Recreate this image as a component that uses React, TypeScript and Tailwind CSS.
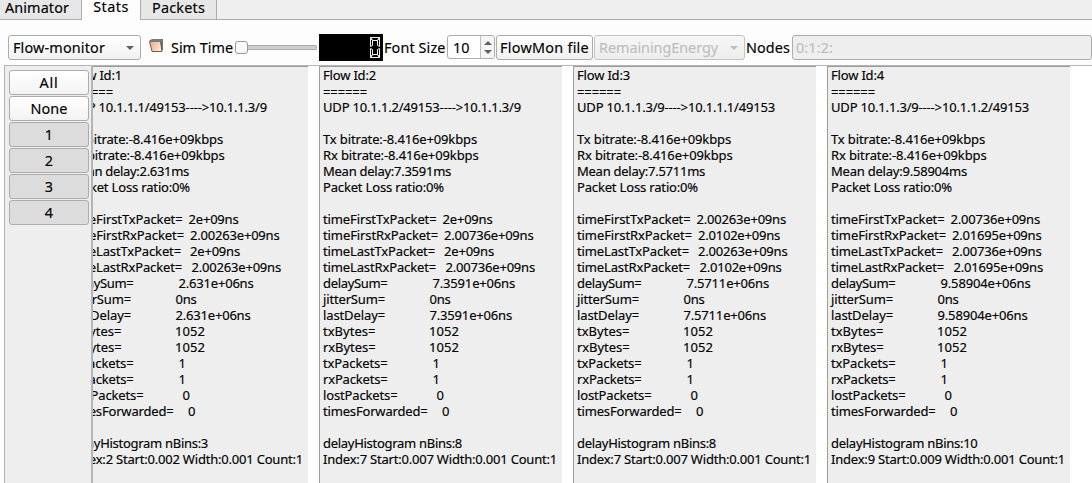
import { useLayoutEffect, useRef } from "react";

type FitProps = { text: string; w: number; className?: string };

/* Single line of text whose tracking is adjusted so that it spans w pixels. */
function Fit({ text, w, className = "" }: FitProps) {
  const ref = useRef<HTMLSpanElement>(null);
  useLayoutEffect(() => {
    const el = ref.current;
    if (!el) return;
    el.style.letterSpacing = "0px";
    const natural = el.getBoundingClientRect().width;
    el.style.letterSpacing = `${(w - natural) / text.length}px`;
  }, [text, w]);
  return (
    <span ref={ref} className={`inline-block whitespace-pre ${className}`}>
      {text}
    </span>
  );
}

type Line = { label: string; w: number; value?: string; vw?: number; at?: number };

type Flow = {
  id: number;
  route: string;
  mean: string;
  meanW: number;
  times: [string, string, string, string];
  delay: string;
  delayW: number;
  bins: number;
  binsW: number;
  index: string;
};

const flows: Flow[] = [
  {
    id: 1, route: "10.1.1.1/49153---->10.1.1.3/9", mean: "2.631", meanW: 120,
    times: ["2e+09ns", "2.00263e+09ns", "2e+09ns", "2.00263e+09ns"],
    delay: "2.631e+06ns", delayW: 75, bins: 3, binsW: 139,
    index: "Index:2 Start:0.002 Width:0.001 Count:1",
  },
  {
    id: 2, route: "10.1.1.2/49153---->10.1.1.3/9", mean: "7.3591", meanW: 128,
    times: ["2e+09ns", "2.00736e+09ns", "2e+09ns", "2.00736e+09ns"],
    delay: "7.3591e+06ns", delayW: 82.5, bins: 8, binsW: 139,
    index: "Index:7 Start:0.007 Width:0.001 Count:1",
  },
  {
    id: 3, route: "10.1.1.3/9---->10.1.1.1/49153", mean: "7.5711", meanW: 128,
    times: ["2.00263e+09ns", "2.0102e+09ns", "2.00263e+09ns", "2.0102e+09ns"],
    delay: "7.5711e+06ns", delayW: 82.5, bins: 8, binsW: 139,
    index: "Index:7 Start:0.007 Width:0.001 Count:1",
  },
  {
    id: 4, route: "10.1.1.3/9---->10.1.1.2/49153", mean: "9.58904", meanW: 136,
    times: ["2.00736e+09ns", "2.01695e+09ns", "2.00736e+09ns", "2.01695e+09ns"],
    delay: "9.58904e+06ns", delayW: 90, bins: 10, binsW: 146.5,
    index: "Index:9 Start:0.009 Width:0.001 Count:1",
  },
];

const timeWidths: Record<number, number> = { 7: 50, 12: 82, 13: 89.5 };

function linesOf(f: Flow): Line[] {
  const blank: Line = { label: "", w: 0 };
  const time = (label: string, w: number, value: string, at: number): Line => ({
    label, w, value, at, vw: timeWidths[value.length],
  });
  return [
    { label: `Flow Id:${f.id}`, w: 53 },
    { label: "======", w: 44 },
    { label: `UDP ${f.route}`, w: 198 },
    blank,
    { label: "Tx bitrate:-8.416e+09kbps", w: 154 },
    { label: "Rx bitrate:-8.416e+09kbps", w: 155.5 },
    { label: `Mean delay:${f.mean}ms`, w: f.meanW },
    { label: "Packet Loss ratio:0%", w: 121 },
    blank,
    time("timeFirstTxPacket=", 113.5, f.times[0], 119.5),
    time("timeFirstRxPacket=", 115, f.times[1], 121),
    time("timeLastTxPacket=", 112, f.times[2], 121),
    time("timeLastRxPacket=", 113, f.times[3], 122.5),
    { label: "delaySum=", w: 64.5, value: f.delay, vw: f.delayW, at: 109.5 },
    { label: "jitterSum=", w: 62, value: "0ns", vw: 21, at: 106.5 },
    { label: "lastDelay=", w: 62, value: f.delay, vw: f.delayW, at: 106.5 },
    { label: "txBytes=", w: 52.5, value: "1052", vw: 30, at: 106 },
    { label: "rxBytes=", w: 52.5, value: "1052", vw: 30, at: 106 },
    { label: "txPackets=", w: 64.5, value: "1", vw: 7.5, at: 109.5 },
    { label: "rxPackets=", w: 64.5, value: "1", vw: 7.5, at: 109.5 },
    { label: "lostPackets=", w: 74.5, value: "0", vw: 7.5, at: 113.5 },
    { label: "timesForwarded=", w: 104.5, value: "0", vw: 7.5, at: 119 },
    blank,
    { label: `delayHistogram nBins:${f.bins}`, w: f.binsW },
    { label: f.index, w: 234 },
  ];
}

function FlowPanel({ flow, clipped }: { flow: Flow; clipped: boolean }) {
  return (
    <section
      className={`flex shrink-0 overflow-hidden border-t border-[#9c9c9c] bg-[#eeeeee] ${
        clipped ? "w-[215px] justify-end" : "w-[243px] border-l"
      }`}
    >
      <div className={`shrink-0 text-[13px] leading-4 ${clipped ? "w-[239px]" : "w-[242px] pl-[3px]"}`}>
        {linesOf(flow).map((l, i) => (
          <div key={i} className="flex h-4 whitespace-pre">
            {l.value ? (
              <>
                <div className="shrink-0" style={{ width: l.at }}>
                  <Fit text={l.label} w={l.w} />
                </div>
                <Fit text={l.value} w={l.vw ?? 0} />
              </>
            ) : (
              l.label && <Fit text={l.label} w={l.w} className={i === 1 ? "pt-px" : ""} />
            )}
          </div>
        ))}
      </div>
    </section>
  );
}

function Triangle({ up = false, className = "" }: { up?: boolean; className?: string }) {
  return (
    <svg viewBox="0 0 8 4" className={`h-1 w-2 ${className}`} fill="currentColor">
      <path d={up ? "M0 4L4 0L8 4Z" : "M0 0H8L4 4Z"} />
    </svg>
  );
}

function Toolbar() {
  return (
    <div className="flex h-[45px] shrink-0 items-start bg-[#fdfdfd] pt-[15px] pl-2 text-[14.4px] leading-[25px]">
      <button className="flex h-[25px] w-[133px] shrink-0 items-center justify-between rounded-[3px] border border-[#acacac] bg-linear-to-b from-white to-[#f1f1f1] pr-[6px] pl-1">
        <Fit text="Flow-monitor" w={92} />
        <Triangle className="text-[#606060]" />
      </button>
      <svg viewBox="0 0 16 14" className="mt-1 ml-2 h-[14px] w-4 shrink-0">
        <defs>
          <linearGradient id="face" x1="0" x2="1" y1="0" y2="0.4">
            <stop offset="0" stopColor="#f0a47c" />
            <stop offset="1" stopColor="#fbe4d2" />
          </linearGradient>
        </defs>
        <path d="M0 2L3 0H14V11L11.5 13L11 3Z" fill="#737373" />
        <path d="M0.5 2.5H11.5L13 12.5H3Z" fill="url(#face)" stroke="#634d42" strokeWidth="0.9" />
        <path d="M0.5 2.8L3.5 0.3H13.8L12.2 3Z" fill="#7c7c7c" />
      </svg>
      <div className="ml-[6px] w-[64px] shrink-0">
        <Fit text="Sim Time" w={62} />
      </div>
      <div className="mt-[6px] flex h-[13px] w-[82px] shrink-0 items-center">
        <div className="h-[13px] w-[13px] shrink-0 rounded-[3px] border border-[#999999] bg-linear-to-b from-white to-[#f5f5f5]" />
        <div className="h-[5px] flex-1 rounded-r-[2px] border border-l-0 border-[#aaaaaa] bg-[#cfcfcf]" />
      </div>
      <div className="-mt-px ml-[2px] flex h-[27px] w-16 shrink-0 justify-end bg-black pt-[3px] pr-[3px]">
        <svg viewBox="0 0 10 21" className="h-[21px] w-[10px]" fill="none" stroke="#eeeeee" strokeWidth="1">
          <path d="M0.5 0.5H9.5L7.5 3.5H2.5Z" />
          <path d="M0.5 0.5V9.5L2.5 8.5V3.5Z" />
          <path d="M9.5 0.5V9.5L7.5 8.5V3.5Z" />
          <path d="M0.5 11.5V20.5L2.5 17.5V12.5Z" />
          <path d="M9.5 11.5V20.5L7.5 17.5V12.5Z" />
          <path d="M0.5 20.5H9.5L7.5 17.5H2.5Z" />
        </svg>
      </div>
      <div className="ml-[1px] w-[63px] shrink-0">
        <Fit text="Font Size" w={61.5} />
      </div>
      <div className="flex h-6 w-12 shrink-0 overflow-hidden rounded-[3px] border border-[#acacac] bg-white">
        <div className="-mt-px w-[32px] pl-[5px]">
          <Fit text="10" w={16.5} />
        </div>
        <div className="flex flex-1 flex-col items-center justify-center gap-[5px] border-l border-[#bcbcbc] bg-[#f5f5f5] text-[#606060]">
          <Triangle up />
          <Triangle />
        </div>
      </div>
      <button className="ml-px flex h-[25px] w-[97px] shrink-0 items-center rounded-[3px] border border-[#acacac] bg-linear-to-b from-white to-[#f1f1f1] pl-[3px]">
        <Fit text="FlowMon file" w={89} />
      </button>
      <button className="ml-px flex h-[25px] w-[151px] shrink-0 items-center justify-between rounded-[3px] border border-[#c4c4c4] bg-linear-to-b from-[#f7f7f7] to-[#ededed] pr-[6px] pl-1 text-[#bebebe]">
        <Fit text="RemainingEnergy" w={119} />
        <Triangle />
      </button>
      <div className="ml-px w-[46px] shrink-0">
        <Fit text="Nodes" w={44} />
      </div>
      <div className="flex h-[25px] flex-1 items-center rounded-[3px] border border-[#acacac] bg-[#eeeeee] pl-[3px] text-[#bebebe]">
        <Fit text="0:1:2:" w={37} />
      </div>
    </div>
  );
}

export default function App() {
  return (
    <div className="flex h-[483px] w-[1092px] flex-col overflow-hidden bg-white font-['Noto_Sans','Open_Sans',sans-serif] text-black [-webkit-text-stroke:0.15px]">
      <div className="flex h-5 shrink-0 bg-[#efefef] text-[14.4px] leading-[15px]">
        <div className="w-[82px] border-r border-b border-[#acacac] bg-[#e7e7e7] pl-[5px]">
          <Fit text="Animator" w={64} />
        </div>
        <div className="flex w-[58px] justify-center bg-[#fdfdfd]">
          <Fit text="Stats" w={35.5} className="-mt-px" />
        </div>
        <div className="w-[77px] border-r border-b border-l border-[#acacac] bg-[#e7e7e7] pl-[11px]">
          <Fit text="Packets" w={53} />
        </div>
        <div className="flex-1 border-b border-[#acacac]" />
      </div>
      <Toolbar />
      <div className="flex min-h-0 flex-1 bg-[#fdfdfd] pl-1">
        <div className="flex min-w-0 flex-1 border-t border-l border-[#b4b4b4] bg-white">
          <aside className="flex w-[88px] shrink-0 flex-col gap-px border-r-2 border-[#b4b4b4] bg-[#eeeeee] pt-1 pr-[2px] pl-1 text-[14.4px]">
            {["All", "None", "1", "2", "3", "4"].map((t, i) => (
              <button
                key={t}
                className={`flex h-[25px] items-center justify-center rounded-[3px] border border-[#acacac] ${
                  i < 2 ? "bg-linear-to-b from-white to-[#f3f3f3]" : "bg-[#dcdcdc]"
                }`}
              >
                <Fit text={t} w={i === 0 ? 19 : i === 1 ? 37 : 8.3} />
              </button>
            ))}
          </aside>
          <main className="flex gap-[11px]">
            {flows.map((f, i) => (
              <FlowPanel key={f.id} flow={f} clipped={i === 0} />
            ))}
          </main>
        </div>
      </div>
    </div>
  );
}
